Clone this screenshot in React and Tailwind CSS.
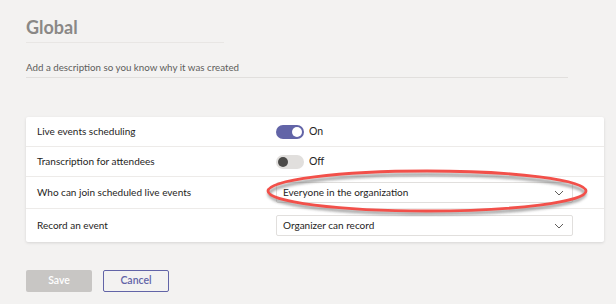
import React from "react";

function Toggle({ on }) {
  return (
    <div className="flex items-center gap-[5px]">
      <div
        className={
          on
            ? "w-[28px] h-[14px] rounded-full bg-[#6264a7] flex items-center justify-end px-[2px]"
            : "w-[28px] h-[14px] rounded-full bg-[#e1dfdd] flex items-center justify-start px-[2px]"
        }
      >
        <div className={on ? "w-[10px] h-[10px] rounded-full bg-white" : "w-[10px] h-[10px] rounded-full bg-[#4b4a48]"} />
      </div>
      <span className="text-[10.5px] text-[#252423]">{on ? "On" : "Off"}</span>
    </div>
  );
}

function Select({ value }) {
  return (
    <div className="w-[297px] h-[21px] border border-[#e1dfdd] rounded-[2px] bg-white flex items-center justify-between pl-[6px] pr-[8px]">
      <span className="text-[10px] text-[#252423]">{value}</span>
      <svg width="10" height="6" viewBox="0 0 10 6" fill="none">
        <path d="M1 1l4 4 4-4" stroke="#605e5c" strokeWidth="1" />
      </svg>
    </div>
  );
}

function Row({ label, children, h, last }) {
  return (
    <div className={`flex items-center ${h} ${last ? "" : "border-b border-[#edebe9]"}`}>
      <div className="w-[250px] pl-[11px] text-[10px] text-[#252423]">{label}</div>
      <div className="flex-1">{children}</div>
    </div>
  );
}

export default function App() {
  return (
    <div
      className="w-[616px] h-[304px] bg-[#f3f2f1] pl-[26px] pt-[16px] overflow-hidden"
      style={{ fontFamily: 'Lato, "Open Sans", sans-serif' }}
    >
      <div className="w-[198px] border-b border-[#e8e6e4] pb-[4px]">
        <div className="text-[18px] font-bold text-[#8a8886] leading-[22px]">Global</div>
      </div>
      <div className="w-[542px] border-b border-[#e1dfdd] mt-[16px] pb-[2px]">
        <div className="text-[9.75px] text-[#605e5c] leading-[16px]">Add a description so you know why it was created</div>
      </div>
      <div className="relative w-[578px] mt-[39px] bg-white rounded-[2px] shadow-[0_1px_3px_rgba(0,0,0,0.12)]">
        <Row label="Live events scheduling" h="h-[30px]">
          <Toggle on />
        </Row>
        <Row label="Transcription for attendees" h="h-[30px]">
          <Toggle on={false} />
        </Row>
        <Row label="Who can join scheduled live events" h="h-[32px]">
          <Select value="Everyone in the organization" />
        </Row>
        <Row label="Record an event" h="h-[33px]" last>
          <Select value="Organizer can record" />
        </Row>
        <svg
          className="absolute left-[236px] top-[50px] pointer-events-none"
          width="330"
          height="50"
          viewBox="0 0 330 50"
        >
          <defs>
            <filter id="blur" x="-10%" y="-30%" width="120%" height="160%">
              <feGaussianBlur stdDeviation="1.6" />
            </filter>
          </defs>
          <ellipse cx="165" cy="27" rx="158" ry="19.5" fill="none" stroke="#6e6e6e" strokeWidth="3" opacity="0.7" filter="url(#blur)" />
          <ellipse cx="165" cy="24" rx="159" ry="20" fill="none" stroke="#f2504a" strokeWidth="2.8" />
        </svg>
      </div>
      <div className="flex gap-[11px] mt-[28px]">
        <div className="w-[66px] h-[22px] rounded-[2px] bg-[#c8c6c4] text-white text-[10.5px] font-semibold flex items-center justify-center">Save</div>
        <div className="w-[66px] h-[22px] rounded-[2px] border border-[#6264a7] text-[#6264a7] text-[10.5px] font-semibold flex items-center justify-center">Cancel</div>
      </div>
    </div>
  );
}
